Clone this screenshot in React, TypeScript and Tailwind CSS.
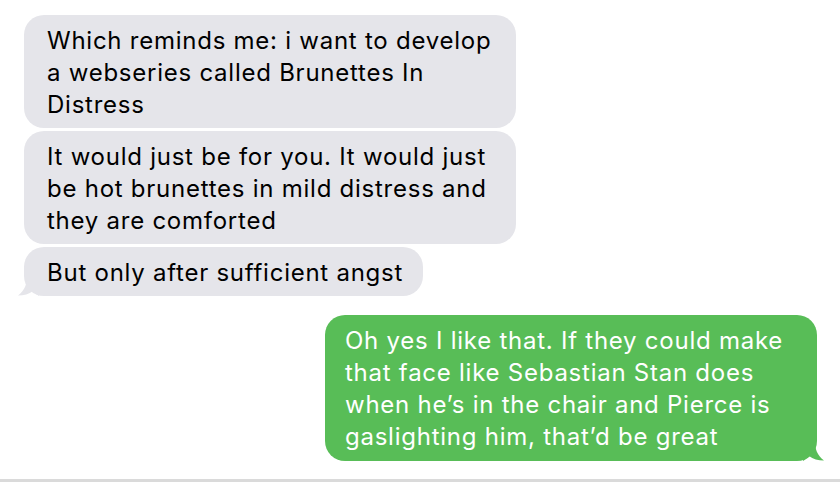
const received = [
  "Which reminds me: i want to develop a webseries called Brunettes In Distress",
  "It would just be for you. It would just be hot brunettes in mild distress and they are comforted",
  "But only after sufficient angst",
];

const sent = "Oh yes I like that. If they could make that face like Sebastian Stan does when he’s in the chair and Pierce is gaslighting him, that’d be great";

const App = () => {
  return (
    <div className="relative h-[482px] w-[840px] overflow-hidden bg-white font-['Inter',sans-serif] text-[24px] leading-[32px] tracking-[0.75px]">
      <div className="flex flex-col pl-6 pr-[23px] pt-[15px]">
        {/* Received messages */}
        <div className="flex flex-col items-start gap-[3px]">
          {received.map((text, i) => (
            <div
              key={i}
              className="relative max-w-[492px] rounded-[20px] bg-[#e5e5ea] pb-[7px] pl-[23px] pr-[20px] pt-[10px] text-black"
            >
              {text}
              {i === received.length - 1 && (
                <svg
                  className="absolute bottom-0 left-[-7px]"
                  width="22"
                  height="20"
                  viewBox="0 0 22 20"
                >
                  <path
                    d="M22 0 L10 0 C10 8 8 14 1 19.5 C7 19.5 12 18 16 15 C18 17 20 19 22 20 Z"
                    fill="#e5e5ea"
                  />
                </svg>
              )}
            </div>
          ))}
        </div>

        {/* Sent message */}
        <div className="mt-[19px] flex justify-end">
          <div className="relative max-w-[492px] rounded-[20px] bg-[#58bd57] pb-2 pl-5 pr-[22px] pt-[10px] text-white">
            {sent}
            <svg
              className="absolute bottom-0 right-[-8px]"
              width="22"
              height="20"
              viewBox="0 0 22 20"
            >
              <path
                d="M0 0 L12 0 C12 8 14 14 21 19.5 C15 19.5 10 18 6 15 C4 17 2 19 0 20 Z"
                fill="#58bd57"
              />
            </svg>
          </div>
        </div>
      </div>

      <div className="absolute bottom-0 left-0 h-[3px] w-full bg-[#dadada]" />
    </div>
  );
};

export default App;
